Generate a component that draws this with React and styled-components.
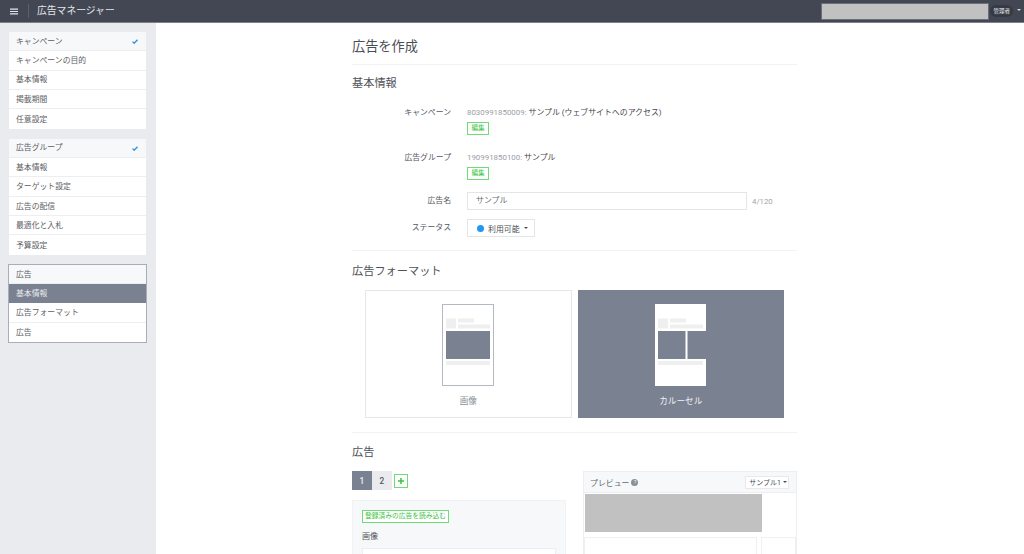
import React from 'react';
import styled, { createGlobalStyle } from 'styled-components';

const GlobalStyle = createGlobalStyle`
  html, body {
    margin: 0;
    padding: 0;
    height: 100%;
    overflow: hidden;
    background: #fff;
    font-family: Roboto, 'Noto Sans CJK JP', sans-serif;
    color: #4c4f55;
  }
  * { box-sizing: border-box; }
`;

const Page = styled.div`
  width: 1024px;
  height: 554px;
  display: flex;
  flex-direction: column;
  overflow: hidden;
`;

// Header
const Header = styled.header`
  flex: none;
  height: 23px;
  display: flex;
  align-items: center;
  background: #424753;
  border-bottom: 1px solid #7d818a;
  padding: 0 1px 0 10px;
  color: #e4e6ea;
`;
const MenuIcon = styled.svg`
  width: 8px;
  height: 7px;
  display: block;
`;
const HeaderDivider = styled.span`
  width: 1px;
  height: 14px;
  background: #5c616d;
  margin: 0 8px 0 10px;
`;
const AppName = styled.div`
  font-size: 9.8px;
  line-height: 1;
  flex: 1;
`;
const AccountBlock = styled.div`
  width: 168px;
  height: 17px;
  background: #c1c1c1;
  border: 1px solid #6a6e78;
`;
const RoleBadge = styled.span`
  height: 12px;
  padding: 0 3px;
  margin-left: 1px;
  border-radius: 6px;
  background: #363a45;
  color: #eceef1;
  font-size: 5.5px;
  line-height: 12px;
`;
const HeaderCaret = styled.span`
  width: 0;
  height: 0;
  margin: -2px 2px 0 4px;
  border-left: 2px solid transparent;
  border-right: 2px solid transparent;
  border-top: 2px solid #d6d8dc;
`;

const Body = styled.div`
  flex: 1;
  display: flex;
  min-height: 0;
`;

// Sidebar
const Sidebar = styled.aside`
  flex: none;
  width: 156px;
  background: #e9ebef;
  padding: 9px 10px 0 9px;
  display: flex;
  flex-direction: column;
  gap: 10px;
`;
const NavGroup = styled.div`
  background: #fff;
  display: flex;
  flex-direction: column;
  ${(p) => p.$boxed && 'outline: 1px solid #a8adb8; outline-offset: 0;'}
`;
const NavRow = styled.div`
  height: 19.35px;
  padding: 1px 8px 0 7px;
  display: flex;
  align-items: center;
  justify-content: space-between;
  font-size: 7.85px;
  line-height: 1;
  color: ${(p) => (p.$active ? '#e8eaee' : '#5b5e65')};
  background: ${(p) => (p.$active ? '#7a8191' : p.$head ? '#f7f8fa' : '#fff')};
  border-bottom: 1px solid ${(p) => (p.$active ? '#7a8191' : '#eceef1')};
  &:last-child { border-bottom: none; }
`;
const CheckIcon = styled.svg`
  width: 6px;
  height: 5px;
  display: block;
`;

// Main column
const Main = styled.main`
  flex: 1;
  min-width: 0;
  padding: 14px 227px 0 196px;
  overflow: hidden;
`;
const PageTitle = styled.h1`
  margin: 0;
  height: 28px;
  font-size: 13.2px;
  line-height: 20px;
  font-weight: 400;
  color: #4a4d53;
  border-bottom: 1px solid #f1f2f4;
`;
const SectionTitle = styled.h2`
  margin: 0;
  font-size: 11.2px;
  line-height: 16px;
  font-weight: 400;
  color: #4f5258;
`;
const Section = styled.section`
  padding-top: ${(p) => p.$top}px;
  padding-bottom: ${(p) => p.$bottom}px;
  border-bottom: ${(p) => (p.$line ? '1px solid #f1f2f4' : 'none')};
`;
const FormGrid = styled.div`
  margin-top: 13px;
  display: grid;
  grid-template-columns: 99px 1fr;
  column-gap: 16px;
  align-items: start;
`;
const FieldLabel = styled.div`
  font-size: 7.85px;
  line-height: 15px;
  text-align: right;
  color: #55585e;
  padding-top: ${(p) => p.$top || 0}px;
`;
const FieldValue = styled.div`
  margin-bottom: ${(p) => p.$gap}px;
  min-width: 0;
`;
const IdLine = styled.div`
  font-size: 7.9px;
  line-height: 15px;
  color: #45484e;
  white-space: nowrap;
`;
const IdNumber = styled.span`
  color: #9a9ea6;
`;
const GreenButton = styled.span`
  display: flex;
  width: ${(p) => (p.$block ? 'fit-content' : '22px')};
  height: 13px;
  margin-top: ${(p) => (p.$block ? 3 : 2)}px;
  align-items: center;
  justify-content: center;
  padding: ${(p) => (p.$block ? '0 2px' : '0')};
  border: 1px solid #6fdc75;
  background: #fff;
  color: #3cc346;
  font-size: ${(p) => (p.$block ? '6.75px' : '6.6px')};
  line-height: 1;
`;
const InputRow = styled.div`
  display: flex;
  align-items: center;
  gap: 5px;
`;
const TextInput = styled.div`
  width: 280px;
  height: 18px;
  border: 1px solid #e4e5e8;
  padding: 0 8px;
  font-size: 7.9px;
  line-height: 16px;
  color: #6a6d73;
`;
const Counter = styled.span`
  font-size: 7.8px;
  color: #a0a3aa;
`;
const StatusButton = styled.div`
  display: flex;
  width: fit-content;
  align-items: center;
  height: 18px;
  padding: 0 6px 0 9px;
  border: 1px solid #e4e5e8;
  font-size: 7.9px;
  color: #4b4e54;
`;
const StatusDot = styled.span`
  width: 7px;
  height: 7px;
  border-radius: 50%;
  background: #2196f3;
  margin-right: 4px;
`;
const Caret = styled.span`
  width: 0;
  height: 0;
  margin-left: ${(p) => p.$gap ?? 4}px;
  border-left: 2px solid transparent;
  border-right: 2px solid transparent;
  border-top: 2px solid ${(p) => p.$color || '#4b4e54'};
`;

// Ad format cards
const FormatRow = styled.div`
  margin: 10px 13px 0;
  display: flex;
  gap: 6px;
`;
const FormatCard = styled.div`
  flex: 1;
  height: 128px;
  display: flex;
  flex-direction: column;
  align-items: center;
  padding-top: 13px;
  border: 1px solid ${(p) => (p.$selected ? '#7a8191' : '#e6e7ea')};
  background: ${(p) => (p.$selected ? '#7a8191' : '#fff')};
`;
const Mock = styled.svg`
  width: 52px;
  height: 82px;
  display: block;
`;
const FormatName = styled.div`
  margin-top: 8px;
  font-size: 8.6px;
  line-height: 14px;
  color: ${(p) => (p.$selected ? '#f0f1f3' : '#8d9097')};
`;

// Ad section
const AdColumns = styled.div`
  margin-top: 10px;
  display: flex;
  justify-content: space-between;
  align-items: flex-start;
`;
const AdEditor = styled.div`
  width: 214px;
`;
const TabRow = styled.div`
  display: flex;
  align-items: center;
`;
const Tab = styled.span`
  width: 20px;
  height: 19px;
  display: flex;
  align-items: center;
  justify-content: center;
  font-size: 8.4px;
  font-weight: 500;
  background: ${(p) => (p.$active ? '#7a8191' : '#e9ebef')};
  color: ${(p) => (p.$active ? '#eef0f3' : '#55585e')};
`;
const AddTab = styled.span`
  width: 14px;
  height: 14px;
  margin-left: 2px;
  border: 1px solid #6fdc75;
  display: flex;
  align-items: center;
  justify-content: center;
`;
const PlusIcon = styled.svg`
  width: 6px;
  height: 6px;
  display: block;
`;
const EditorPanel = styled.div`
  margin-top: 10px;
  height: 80px;
  padding: 6px 9px 0;
  background: #f7f8fa;
  border: 1px solid #f1f2f4;
`;
const ImageLabel = styled.div`
  margin-top: 7px;
  font-size: 8px;
  line-height: 14px;
  color: #55585e;
`;
const ImageBox = styled.div`
  margin-top: 4px;
  height: 40px;
  background: #fff;
  border: 1px solid #eceef1;
`;
const PreviewPanel = styled.div`
  width: 214px;
  height: 90px;
  border: 1px solid #eceef1;
  border-bottom: none;
`;
const PreviewHead = styled.div`
  height: 21px;
  display: flex;
  align-items: center;
  padding: 0 7px 0 6px;
  background: #f7f8fa;
  border-bottom: 1px solid #eceef1;
  font-size: 7.9px;
  color: #666970;
`;
const HelpMark = styled.span`
  width: 7px;
  height: 7px;
  margin-left: 2px;
  border-radius: 50%;
  background: #8a8e96;
  color: #fff;
  font-size: 5.5px;
  line-height: 7px;
  text-align: center;
`;
const SampleSelect = styled.span`
  margin-left: auto;
  height: 13px;
  padding: 0 1px 0 3px;
  display: flex;
  align-items: center;
  background: #fff;
  border: 1px solid #e8e9ec;
  font-size: 7px;
  color: #4b4e54;
`;
const PreviewImage = styled.div`
  width: 177px;
  height: 38px;
  margin: 1px 0 0 1px;
  background: #c1c1c1;
`;
const PreviewCards = styled.div`
  margin-top: 5px;
  display: flex;
  gap: 4px;
  height: 30px;
`;
const PreviewCard = styled.div`
  flex: ${(p) => (p.$wide ? '0 0 173px' : '1')};
  border: 1px solid #eef0f2;
  border-bottom: none;
`;

const navGroups = [
  { items: ['キャンペーン', 'キャンペーンの目的', '基本情報', '掲載期間', '任意設定'], done: true },
  { items: ['広告グループ', '基本情報', 'ターゲット設定', '広告の配信', '最適化と入札', '予算設定'], done: true },
  { items: ['広告', '基本情報', '広告フォーマット', '広告'], active: 1, boxed: true },
];

function ImageMock() {
  return (
    <Mock viewBox="0 0 52 82">
      <rect x="0.5" y="0.5" width="51" height="81" fill="#fff" stroke="#b4b8c1" />
      <rect x="4" y="14.5" width="10" height="10" fill="#efefef" />
      <rect x="16" y="14.5" width="16" height="4" fill="#efefef" />
      <rect x="16" y="20.5" width="32" height="4" fill="#efefef" />
      <rect x="4" y="27" width="44" height="28" fill="#7a8191" />
      <rect x="4" y="57" width="44" height="4" fill="#efefef" />
    </Mock>
  );
}

function CarouselMock() {
  return (
    <Mock viewBox="0 0 52 82">
      <path d="M0 0H51V27H32.5V55H51V82H0Z" fill="#fff" />
      <rect x="3" y="14.5" width="10" height="10" fill="#efefef" />
      <rect x="15" y="14.5" width="16" height="4" fill="#efefef" />
      <rect x="15" y="20.5" width="33" height="4" fill="#efefef" />
      <rect x="3" y="27" width="27.5" height="28" fill="#7a8191" />
      <rect x="3" y="57" width="45" height="4" fill="#efefef" />
    </Mock>
  );
}

export default function App() {
  return (
    <Page>
      <GlobalStyle />
      <Header>
        <MenuIcon viewBox="0 0 8 7">
          <path d="M0 .5h8v1.2H0zM0 2.9h8v1.2H0zM0 5.3h8v1.2H0z" fill="#e4e6ea" />
        </MenuIcon>
        <HeaderDivider />
        <AppName>広告マネージャー</AppName>
        <AccountBlock />
        <RoleBadge>管理者</RoleBadge>
        <HeaderCaret />
      </Header>
      <Body>
        <Sidebar>
          {navGroups.map((group, i) => (
            <NavGroup key={i} $boxed={group.boxed}>
              {group.items.map((item, j) => (
                <NavRow key={j} $head={j === 0} $active={group.active === j}>
                  {item}
                  {j === 0 && group.done && (
                    <CheckIcon viewBox="0 0 6 5">
                      <path d="M.5 2.6 2.2 4.2 5.5.7" fill="none" stroke="#2b8fe0" strokeWidth="1.3" />
                    </CheckIcon>
                  )}
                </NavRow>
              ))}
            </NavGroup>
          ))}
        </Sidebar>
        <Main>
          <PageTitle>広告を作成</PageTitle>
          <Section $top={11} $bottom={0} $line>
            <SectionTitle>基本情報</SectionTitle>
            <FormGrid>
              <FieldLabel>キャンペーン</FieldLabel>
              <FieldValue $gap={15}>
                <IdLine><IdNumber>8030991850009:</IdNumber> サンプル (ウェブサイトへのアクセス)</IdLine>
                <GreenButton>編集</GreenButton>
              </FieldValue>
              <FieldLabel>広告グループ</FieldLabel>
              <FieldValue $gap={12}>
                <IdLine><IdNumber>190991850100:</IdNumber> サンプル</IdLine>
                <GreenButton>編集</GreenButton>
              </FieldValue>
              <FieldLabel $top={1}>広告名</FieldLabel>
              <FieldValue $gap={9}>
                <InputRow>
                  <TextInput>サンプル</TextInput>
                  <Counter>4/120</Counter>
                </InputRow>
              </FieldValue>
              <FieldLabel $top={1}>ステータス</FieldLabel>
              <FieldValue $gap={13}>
                <StatusButton>
                  <StatusDot />利用可能<Caret />
                </StatusButton>
              </FieldValue>
            </FormGrid>
          </Section>
          <Section $top={13} $bottom={14} $line>
            <SectionTitle>広告フォーマット</SectionTitle>
            <FormatRow>
              <FormatCard>
                <ImageMock />
                <FormatName>画像</FormatName>
              </FormatCard>
              <FormatCard $selected>
                <CarouselMock />
                <FormatName $selected>カルーセル</FormatName>
              </FormatCard>
            </FormatRow>
          </Section>
          <Section $top={12} $bottom={0}>
            <SectionTitle>広告</SectionTitle>
            <AdColumns>
              <AdEditor>
                <TabRow>
                  <Tab $active>1</Tab>
                  <Tab>2</Tab>
                  <AddTab>
                    <PlusIcon viewBox="0 0 7 7">
                      <path d="M2.6 0h1.8v2.6H7v1.8H4.4V7H2.6V4.4H0V2.6h2.6z" fill="#3cc346" />
                    </PlusIcon>
                  </AddTab>
                </TabRow>
                <EditorPanel>
                  <GreenButton $block>登録済みの広告を読み込む</GreenButton>
                  <ImageLabel>画像</ImageLabel>
                  <ImageBox />
                </EditorPanel>
              </AdEditor>
              <PreviewPanel>
                <PreviewHead>
                  プレビュー<HelpMark>?</HelpMark>
                  <SampleSelect>サンプル1<Caret $gap={2} /></SampleSelect>
                </PreviewHead>
                <PreviewImage />
                <PreviewCards>
                  <PreviewCard $wide />
                  <PreviewCard />
                </PreviewCards>
              </PreviewPanel>
            </AdColumns>
          </Section>
        </Main>
      </Body>
    </Page>
  );
}
